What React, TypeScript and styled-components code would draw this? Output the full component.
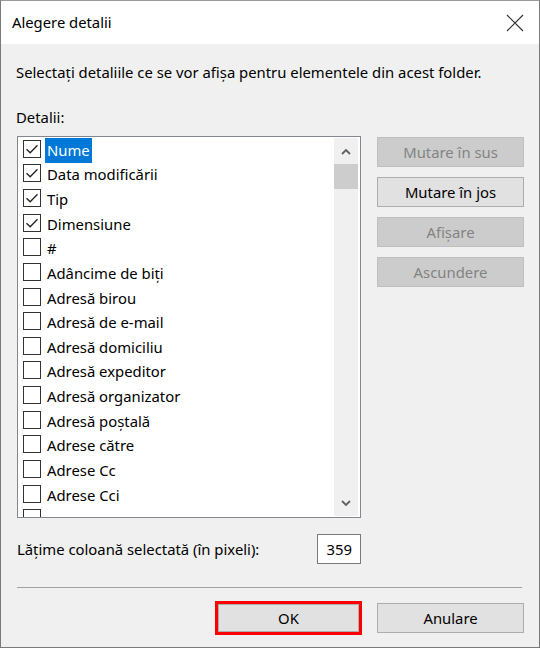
import React from "react";
import styled, { createGlobalStyle } from "styled-components";

/*--------------------------------------------------------------*/

const details: { name: string; checked: boolean }[] = [
  { name: "Nume", checked: true },
  { name: "Data modificării", checked: true },
  { name: "Tip", checked: true },
  { name: "Dimensiune", checked: true },
  { name: "#", checked: false },
  { name: "Adâncime de biți", checked: false },
  { name: "Adresă birou", checked: false },
  { name: "Adresă de e-mail", checked: false },
  { name: "Adresă domiciliu", checked: false },
  { name: "Adresă expeditor", checked: false },
  { name: "Adresă organizator", checked: false },
  { name: "Adresă poștală", checked: false },
  { name: "Adrese către", checked: false },
  { name: "Adrese Cc", checked: false },
  { name: "Adrese Cci", checked: false },
  // next row is only peeking out under the bottom edge
  { name: "", checked: false },
];

/*--------------------------------------------------------------*/

export default function App() {
  return (
    <>
      <GlobalStyle />
      <Window>
        <TitleBar>
          <Title>Alegere detalii</Title>
          <CloseButton aria-label="Închidere">
            <svg width="18" height="18" viewBox="0 0 18 18">
              <path d="M1 1 L17 17 M17 1 L1 17" stroke="#333" strokeWidth="1.2" fill="none" />
            </svg>
          </CloseButton>
        </TitleBar>

        <Body>
          <Intro>Selectați detaliile ce se vor afișa pentru elementele din acest folder.</Intro>
          <Label>Detalii:</Label>

          <MainRow>
            <ListBox>
              <Items>
                {details.map((d, i) => (
                  <Item key={i}>
                    <CheckBox>
                      {d.checked && (
                        <svg width="14" height="14" viewBox="0 0 14 14">
                          <path d="M1.5 7.2 L5.2 10.8 L12.5 3.2" stroke="#222" strokeWidth="1.3" fill="none" />
                        </svg>
                      )}
                    </CheckBox>
                    {d.name && <ItemText $selected={i === 0}>{d.name}</ItemText>}
                  </Item>
                ))}
              </Items>
              <ScrollBar>
                <ScrollArrow>
                  <svg width="10" height="7" viewBox="0 0 10 7">
                    <path d="M1 6 L5 2 L9 6" stroke="#606060" strokeWidth="1.8" fill="none" />
                  </svg>
                </ScrollArrow>
                <Thumb />
                <Track />
                <ScrollArrow>
                  <svg width="10" height="7" viewBox="0 0 10 7">
                    <path d="M1 1 L5 5 L9 1" stroke="#606060" strokeWidth="1.8" fill="none" />
                  </svg>
                </ScrollArrow>
              </ScrollBar>
            </ListBox>

            <SideButtons>
              <Button disabled>Mutare în sus</Button>
              <Button>Mutare în jos</Button>
              <Button disabled>Afișare</Button>
              <Button disabled>Ascundere</Button>
            </SideButtons>
          </MainRow>

          <WidthRow>
            <span>Lățime coloană selectată (în pixeli):</span>
            <WidthInput>359</WidthInput>
          </WidthRow>

          <Separator />

          <Footer>
            <Highlight>
              <Button>OK</Button>
            </Highlight>
            <Button>Anulare</Button>
          </Footer>
        </Body>
      </Window>
    </>
  );
}

/*--------------------------------------------------------------*/

const GlobalStyle = createGlobalStyle`
  body {
    margin: 0;
    background: #ffffff;
    font-family: "Noto Sans", "Open Sans", sans-serif;
    font-size: 14.85px;
    color: #000;
  }
`;

const Window = styled.div`
  box-sizing: border-box;
  width: 540px;
  height: 648px;
  display: flex;
  flex-direction: column;
  border: 1px solid #7a7a7a;
  border-top-color: #9a9a9a;
`;

const TitleBar = styled.div`
  height: 43px;
  background: #ffffff;
  display: flex;
  align-items: center;
  justify-content: space-between;
  padding: 0 15px 0 11px;
`;

const Title = styled.div`
  font-size: 14.8px;
  color: #000;
  margin-top: -1px;
`;

const CloseButton = styled.div`
  display: flex;
  width: 18px;
  height: 18px;
`;

const Body = styled.div`
  flex: 1;
  background: #f0f0f0;
  display: flex;
  flex-direction: column;
  padding: 0 15px 0 15px;
`;

const Intro = styled.div`
  margin-top: 18px;
  line-height: 20px;
`;

const Label = styled.div`
  margin-top: 25px;
  line-height: 20px;
`;

const MainRow = styled.div`
  display: flex;
  margin-top: 9px;
`;

const ListBox = styled.div`
  box-sizing: border-box;
  width: 345px;
  height: 382px;
  margin-left: 1px;
  border: 1px solid #828790;
  background: #ffffff;
  display: flex;
`;

const Items = styled.div`
  flex: 1;
  overflow: hidden;
  padding-top: 1px;
`;

const Item = styled.div`
  height: 24.64px;
  display: flex;
  align-items: center;
  padding-left: 5px;
`;

const CheckBox = styled.div`
  box-sizing: border-box;
  flex: none;
  width: 18px;
  height: 18px;
  border: 1px solid #333333;
  background: #ffffff;
  display: flex;
  align-items: center;
  justify-content: center;
  margin-right: 4px;
  margin-bottom: 3px;
`;

const ItemText = styled.span<{ $selected?: boolean }>`
  padding: 0 2px;
  line-height: 25px;
  background: ${({ $selected }) => ($selected ? "#0078d7" : "transparent")};
  color: ${({ $selected }) => ($selected ? "#ffffff" : "#000000")};
`;

const ScrollBar = styled.div`
  width: 24px;
  margin: 1px 2px 1px 0;
  background: #f0f0f0;
  display: flex;
  flex-direction: column;
`;

const ScrollArrow = styled.div`
  height: 26px;
  display: flex;
  align-items: center;
  justify-content: center;
`;

const Thumb = styled.div`
  height: 25px;
  background: #cdcdcd;
`;

const Track = styled.div`
  flex: 1;
`;

const SideButtons = styled.div`
  display: flex;
  flex-direction: column;
  gap: 10px;
  margin-left: 16px;
  margin-top: 1px;
`;

const Button = styled.button`
  box-sizing: border-box;
  width: 147px;
  height: 30px;
  font-family: inherit;
  font-size: 14.85px;
  background: ${({ disabled }) => (disabled ? "#cccccc" : "#e1e1e1")};
  border: 1px solid ${({ disabled }) => (disabled ? "#bfbfbf" : "#adadad")};
  color: ${({ disabled }) => (disabled ? "#838383" : "#000000")};
  padding: 0;
  border-radius: 0;
`;

const WidthRow = styled.div`
  display: flex;
  align-items: center;
  justify-content: space-between;
  width: 344px;
  margin-top: 16px;
  padding-left: 1px;
`;

const WidthInput = styled.div`
  box-sizing: border-box;
  width: 44px;
  height: 30px;
  border: 1px solid #7a7a7a;
  background: #ffffff;
  display: flex;
  align-items: center;
  justify-content: flex-end;
  padding-right: 8px;
`;

const Separator = styled.div`
  height: 1px;
  background: #a0a0a0;
  margin: 23px 2px 0 1px;
`;

const Footer = styled.div`
  display: flex;
  justify-content: flex-end;
  align-items: center;
  gap: 15px;
  margin-top: 13px;
`;

const Highlight = styled.div`
  border: 3px solid #ff0000;
  display: flex;
  width: 147px;
  height: 34px;
  box-sizing: border-box;

  & > button {
    width: 100%;
    height: 100%;
    border-color: #adadad;
  }
`;
